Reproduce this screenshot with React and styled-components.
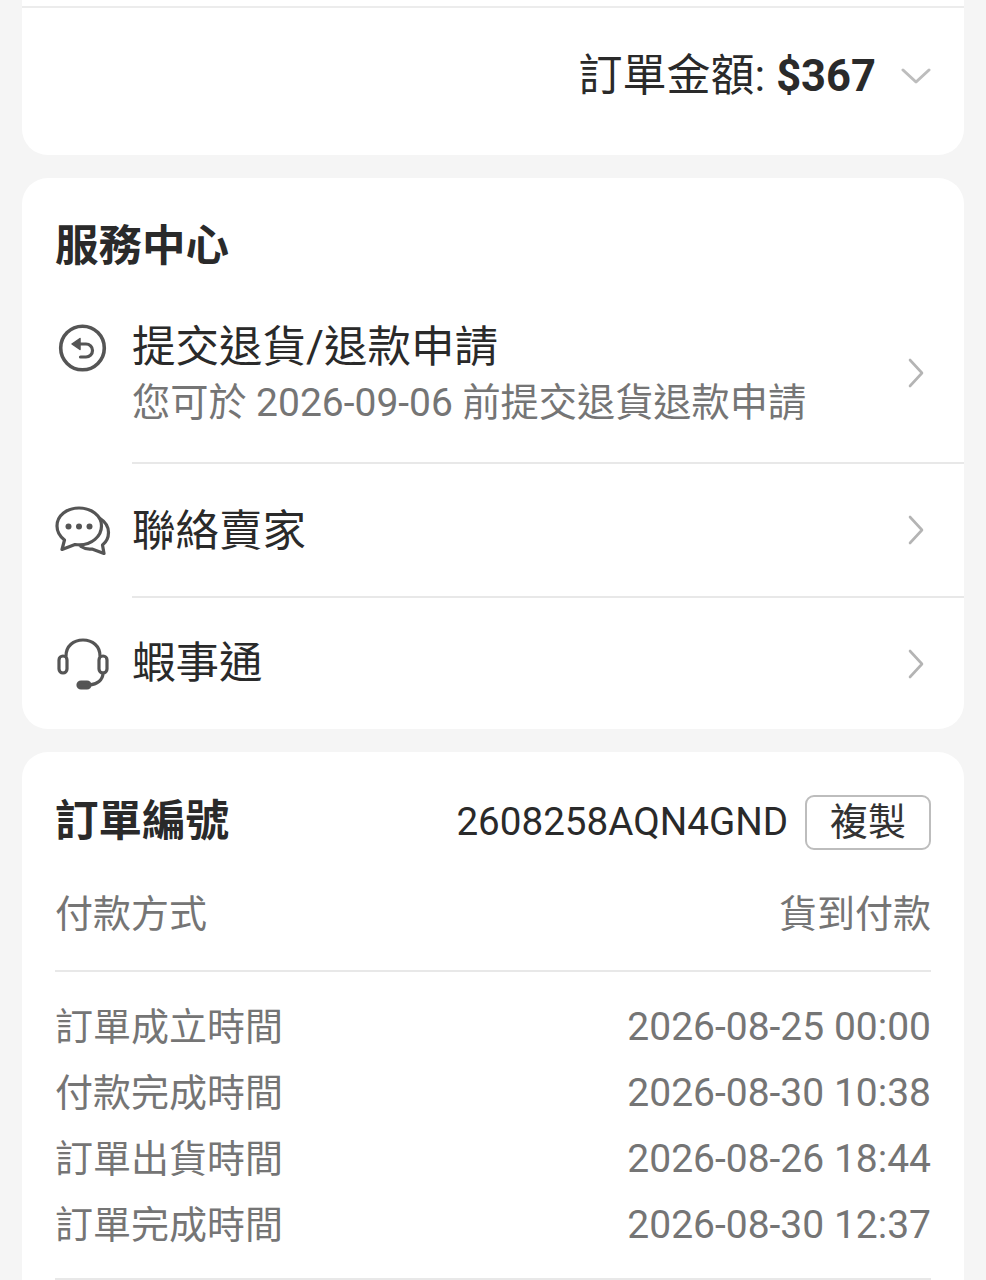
import React from "react";
import styled, { createGlobalStyle } from "styled-components";

const Global = createGlobalStyle`
  html, body { margin: 0; padding: 0; background: #f5f5f5; }
  #root { height: 1280px; overflow: hidden; }
  * { box-sizing: border-box; }
`;
const Page = styled.div`
  width: 986px; height: 1280px; overflow: hidden;
  padding: 0 22px; display: flex; flex-direction: column; gap: 23px;
  font-family: Roboto, "Noto Sans CJK TC", sans-serif; color: #2a2a2a;
  background: #f5f5f5;
`;
const Card = styled.section`
  background: #fff; border-radius: 26px; flex: none;
`;
const SummaryCard = styled(Card)`
  height: 155px; border-radius: 0 0 26px 26px; padding-top: 6px;
`;
const TopRule = styled.div`height: 2px; background: #ececec;`;
const AmountRow = styled.div`
  display: flex; align-items: center; justify-content: flex-end;
  height: 132px; padding: 4px 33px 0 0; gap: 25px;
  font-size: 44px; line-height: 60px;
`;
const Amount = styled.span`font-weight: 700; font-size: 43.5px;`;
const ServiceCard = styled(Card)`height: 551px; padding-top: 39px;`;
const CardTitle = styled.h2`
  margin: 0; font-size: 43.5px; line-height: 60px; font-weight: 700; color: #2a2a2a;
`;
const ServiceTitle = styled(CardTitle)`padding-left: 33px; height: 60px;`;
const ServiceRow = styled.div`
  display: flex; align-items: center; height: ${p => p.$h}px; padding: 0 40px 0 33px;
`;
const IconSlot = styled.div`
  width: 77px; flex: none; display: flex; align-items: center;
  align-self: ${p => (p.$top ? "flex-start" : "center")};
  margin-top: ${p => p.$top || 0}px;
  padding-top: ${p => p.$nudge || 0}px;
  color: #555;
`;
const RowBody = styled.div`
  flex: 1; display: flex; flex-direction: column; min-width: 0;
  align-self: ${p => (p.$top ? "flex-start" : "center")};
  margin-top: ${p => p.$top || 0}px;
  padding-top: ${p => p.$nudge || 0}px;
`;
const RowLabel = styled.div`font-size: 43.5px; line-height: 52px; color: #2a2a2a;`;
const RowHint = styled.div`font-size: 38.2px; line-height: 59px; color: #757575; white-space: nowrap;`;
const Digits = styled.span`font-size: 39px;`;
const Divider = styled.div`height: 2px; background: #e8e8e8; margin-left: 110px;`;
const OrderCard = styled(Card)`padding: 34px 33px 0 33px; height: 560px;`;
const NumberRow = styled.div`
  display: flex; align-items: center; justify-content: space-between; height: 72px;
`;
const NumberGroup = styled.div`display: flex; align-items: center; gap: 17px;`;
const OrderNumber = styled.span`font-size: 38.6px; line-height: 52px; color: #2a2a2a;`;
const CopyButton = styled.button`
  width: 126px; height: 55px; padding: 0; background: #fff;
  border: 2px solid #bdbdbd; border-radius: 9px;
  font: 400 38px/50px Roboto, "Noto Sans CJK TC", sans-serif; color: #333;
`;
const InfoRow = styled.div`
  display: flex; align-items: center; justify-content: space-between;
  height: ${p => p.$h}px;
  font-size: 38px; line-height: 52px; color: #757575;
`;
const InfoDivider = styled.div`height: 2px; background: #e8e8e8;`;
const TimeList = styled.div`padding: 22px 0 20px;`;

const Chevron = styled.svg`
  flex: none; display: block; margin-top: ${p => p.$mt || 0}px;
`;
const RightChevron = ({ mt }) => (
  <Chevron $mt={mt} width="16" height="30" viewBox="0 0 16 30" fill="none" stroke="#b4b4b4" strokeWidth="2.6" strokeLinecap="round" strokeLinejoin="round">
    <path d="M2 2l12 13L2 28" />
  </Chevron>
);
const DownChevron = () => (
  <Chevron width="30" height="16" viewBox="0 0 30 16" fill="none" stroke="#bdbdbd" strokeWidth="3" strokeLinecap="round" strokeLinejoin="round">
    <path d="M2 2l13 12L28 2" />
  </Chevron>
);
const ReturnIcon = () => (
  <svg width="54" height="52" viewBox="0 0 54 52" fill="none" stroke="#555" strokeWidth="3.6" strokeLinecap="round" strokeLinejoin="round">
    <circle cx="27.500" cy="26" r="21.800" />
    <path d="M21.500 22h9.500a6.500 6.500 0 0 1 0 13h-5.500" strokeWidth="3.200" />
    <path d="M25 16.500v11l-8-5.500z" fill="#555" stroke="#555" strokeWidth="1.500" />
  </svg>
);
const ChatIcon = () => (
  <svg width="56" height="50" viewBox="0 0 56 50" fill="none" stroke="#555" strokeWidth="3.2" strokeLinecap="round" strokeLinejoin="round">
    <path d="M24 3C12 3 2 10.500 2 21c0 5.500 3 10.500 7.500 14L7 44.500 20 39.500c1.500.2 3 .4 4.500.4 12 0 22-8.400 22-18.900S36 3 24 3z" />
    <path d="M44.500 13c5.500 3.500 9 8.500 9 14.500 0 5-2.200 9.500-6 12.500l1.500 8.500-12-4.500c-4 .5-8 -.5-11-2.500" />
    <circle cx="13.500" cy="21.500" r="3" fill="#555" stroke="none" />
    <circle cx="24" cy="21.500" r="3" fill="#555" stroke="none" />
    <circle cx="34.500" cy="21.500" r="3" fill="#555" stroke="none" />
  </svg>
);
const HeadsetIcon = () => (
  <svg width="54" height="52" viewBox="0 0 54 52" fill="none" stroke="#555" strokeWidth="3.2" strokeLinecap="round" strokeLinejoin="round">
    <path d="M11 18C11 8 18.500 2 28 2s17 6 17 16" />
    <rect x="4" y="18" width="8" height="17" rx="4" />
    <rect x="44" y="18" width="8" height="17" rx="4" />
    <path d="M48 35c0 7-6 11.500-14 12" />
    <rect x="23" y="44" width="12" height="6" rx="3" fill="#555" />
  </svg>
);

const times = [
  ["訂單成立時間", "2026-08-25 00:00"],
  ["付款完成時間", "2026-08-30 10:38"],
  ["訂單出貨時間", "2026-08-26 18:44"],
  ["訂單完成時間", "2026-08-30 12:37"],
];

export default function App() {
  return (
    <Page>
      <Global />
      <SummaryCard>
        <TopRule />
        <AmountRow>
          <span>訂單金額: <Amount>$367</Amount></span>
          <DownChevron />
        </AmountRow>
      </SummaryCard>
      <ServiceCard>
        <ServiceTitle>服務中心</ServiceTitle>
        <ServiceRow $h={185}>
          <IconSlot $top={45}><ReturnIcon /></IconSlot>
          <RowBody $top={45}>
            <RowLabel>提交退貨/退款申請</RowLabel>
            <RowHint>您可於 <Digits>2026-09-06</Digits> 前提交退貨退款申請</RowHint>
          </RowBody>
          <RightChevron mt={6} />
        </ServiceRow>
        <Divider />
        <ServiceRow $h={132}>
          <IconSlot><ChatIcon /></IconSlot>
          <RowBody $nudge={3}><RowLabel>聯絡賣家</RowLabel></RowBody>
          <RightChevron />
        </ServiceRow>
        <Divider />
        <ServiceRow $h={130}>
          <IconSlot $nudge={2}><HeadsetIcon /></IconSlot>
          <RowBody $nudge={2}><RowLabel>蝦事通</RowLabel></RowBody>
          <RightChevron mt={2} />
        </ServiceRow>
      </ServiceCard>
      <OrderCard>
        <NumberRow>
          <CardTitle>訂單編號</CardTitle>
          <NumberGroup>
            <OrderNumber>2608258AQN4GND</OrderNumber>
            <CopyButton>複製</CopyButton>
          </NumberGroup>
        </NumberRow>
        <InfoRow $h={112}>
          <span>付款方式</span>
          <span>貨到付款</span>
        </InfoRow>
        <InfoDivider />
        <TimeList>
          {times.map(([k, v]) => (
            <InfoRow key={k} $h={66}>
              <span>{k}</span>
              <Digits>{v}</Digits>
            </InfoRow>
          ))}
        </TimeList>
        <InfoDivider />
      </OrderCard>
    </Page>
  );
}
